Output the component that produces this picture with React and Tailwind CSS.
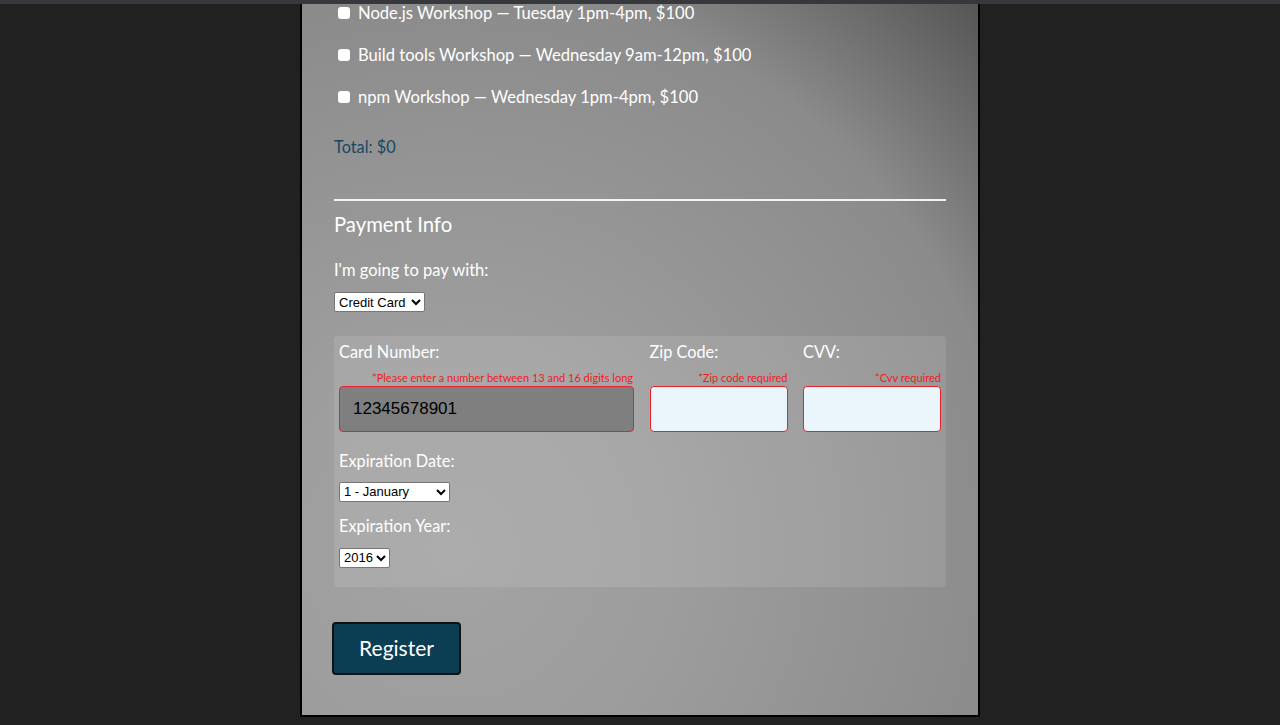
import { useState } from 'react'

const workshops = [
  'Node.js Workshop — Tuesday 1pm-4pm, $100',
  'Build tools Workshop — Wednesday 9am-12pm, $100',
  'npm Workshop — Wednesday 1pm-4pm, $100',
]

export default function App() {
  const [card, setCard] = useState('12345678901')

  return (
    <div className="min-h-[725px] bg-[#212121] font-['Lato',sans-serif] overflow-hidden">
      <div className="h-[4px] bg-[#36383c]"></div>
      <div className="mx-auto w-[680px] h-[713px] overflow-hidden border-x-2 border-b-2 border-black bg-[radial-gradient(circle_at_150px_546px,#a3a3a3_0px,#9d9d9d_220px,#8b8b8b_560px,#555555_760px)] px-[32px]">
        <div className="-mt-[12px]">
          {workshops.map((w) => (
            <label key={w} className="flex items-center h-[42px] pl-[4px] text-[16.6px] text-white">
              <input type="checkbox" className="appearance-none w-[12px] h-[12px] bg-white rounded-[3px] mr-[8px]" />
              {w}
            </label>
          ))}
        </div>

        <p className="mt-[17px] h-[24px] leading-[24px] text-[16.3px] text-[#174863]">Total: $0</p>

        <hr className="mt-[40px] border-0 h-[2px] bg-[#f1f4f7]" />

        <h2 className="mt-[9px] h-[28px] leading-[28px] text-[20.3px] text-white">Payment Info</h2>

        <label className="block mt-[20px] h-[24px] leading-[24px] text-[16.5px] text-white">I'm going to pay with:</label>
        <select className="mt-[10px] h-[20px] w-[91px] bg-white border border-[#767676] rounded-[2px] text-[13px] font-['Liberation_Sans',sans-serif] text-black">
          <option>Credit Card</option>
        </select>

        <div className="mt-[23px] bg-white/10 rounded-[4px] px-[5px] pt-[4px] pb-[19px]">
          <div className="flex justify-between">
            <div className="w-[295px]">
              <label className="block h-[24px] leading-[24px] text-[16.3px] text-white">Card Number:</label>
              <p className="mt-[7px] h-[14px] leading-[14px] text-[11px] text-right text-[#f01c1c] pr-[1px]">*Please enter a number between 13 and 16 digits long</p>
              <input value={card} onChange={(e) => setCard(e.target.value)} className="mt-[1px] w-full h-[46px] border border-[#e8222a] rounded-[4px] bg-[#7f7f7f] pl-[13px] text-[17px] font-['Liberation_Sans',sans-serif] text-black outline-none" />
            </div>
            <div className="w-[138px]">
              <label className="block h-[24px] leading-[24px] text-[16.3px] text-white">Zip Code:</label>
              <p className="mt-[7px] h-[14px] leading-[14px] text-[11px] text-right text-[#f01c1c]">*Zip code required</p>
              <input className="mt-[1px] w-full h-[46px] border border-[#e8222a] rounded-[4px] bg-[#ebf5fc] outline-none" />
            </div>
            <div className="w-[138px]">
              <label className="block h-[24px] leading-[24px] text-[16.3px] text-white">CVV:</label>
              <p className="mt-[7px] h-[14px] leading-[14px] text-[11px] text-right text-[#f01c1c]">*Cvv required</p>
              <input className="mt-[1px] w-full h-[46px] border border-[#e8222a] rounded-[4px] bg-[#ebf5fc] outline-none" />
            </div>
          </div>

          <label className="block mt-[17px] h-[24px] leading-[24px] text-[16.3px] text-white">Expiration Date:</label>
          <select className="block mt-[9px] h-[20px] w-[111px] bg-white border border-[#767676] rounded-[2px] text-[13px] font-['Liberation_Sans',sans-serif] text-black">
            <option>1 - January</option>
          </select>

          <label className="block mt-[12px] h-[24px] leading-[24px] text-[16.3px] text-white">Expiration Year:</label>
          <select className="block mt-[10px] h-[20px] w-[51px] bg-white border border-[#767676] rounded-[2px] text-[13px] font-['Liberation_Sans',sans-serif] text-black">
            <option>2016</option>
          </select>
        </div>

        <button className="mt-[35px] -ml-[2px] w-[129px] h-[53px] bg-[#0b3d53] border-2 border-[#111] rounded-[4px] text-white text-[21px]">
          Register
        </button>
      </div>
    </div>
  )
}
